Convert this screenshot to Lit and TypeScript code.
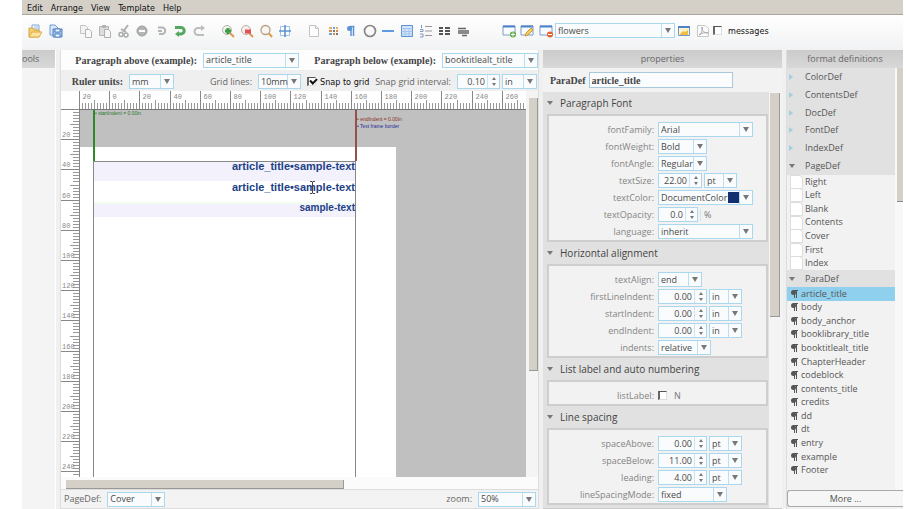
import { LitElement, html, svg, css } from "lit";
import { customElement } from "lit/decorators.js";
import { classMap } from "lit/directives/class-map.js";

const icons: Record<string, unknown> = {
  open: svg`<path d="M4 5V1h7v7" fill="#fff" stroke="#7fa6d8"/><path d="M6 3h4M6 5h4" stroke="#8fb3de"/><path d="M1 13V4h4l1 2h5v7z" fill="#f4cf74" stroke="#d9a63d"/><path d="M1 13l3-5h10l-3 5z" fill="#fbe3a0" stroke="#dfae45"/>`,
  save: svg`<path d="M1 11V1h5l3 3v7z" fill="#dbe8f8" stroke="#6f9ad2"/><path d="M4 5h9v8H4z" fill="#9fc0ea" stroke="#4f82c4"/><path d="M6 5h5v3H6zM6 10h5v3H6z" fill="#fff" stroke="#4f82c4"/>`,
  copy: svg`<path d="M1.500 1.500h5l2 2v6h-7z" fill="#f2f2f2" stroke="#c5c5c5"/><path d="M6.500 5.500h4l2 2v6h-6z" fill="#fafafa" stroke="#b4b4b4"/>`,
  paste: svg`<path d="M1.500 2.500h9v9h-9z" fill="#dcdcdc" stroke="#b4b4b4"/><path d="M4 1h4v3H4z" fill="#b4b4b4"/><path d="M6.500 5.500h4l2 2v6h-6z" fill="#f6f6f6" stroke="#b0b0b0"/>`,
  cut: svg`<path d="M11 1L6 8M4 5l5 3" stroke="#b0b0b0" stroke-width="2" fill="none"/><circle cx="4" cy="10.500" r="2" fill="none" stroke="#aaa" stroke-width="1.500"/><circle cx="9" cy="11" r="2" fill="none" stroke="#aaa" stroke-width="1.500"/>`,
  remove: svg`<circle cx="7" cy="7" r="5" fill="#b4b4b4" stroke="#9c9c9c"/><path d="M4 7h6" stroke="#fff" stroke-width="2"/>`,
  again: svg`<path d="M4 3.500h4a3 3 0 0 1 0 6.500H5M4 7h4" fill="none" stroke="#b4b4b4" stroke-width="2"/>`,
  undo: svg`<path d="M2 3.500h6a3 3 0 0 1 0 6.500H4" fill="none" stroke="#55a860" stroke-width="3"/><path d="M6 7v6L2 10z" fill="#55a860"/>`,
  redo: svg`<path d="M11 4H6a3 3 0 0 0 0 7h6" fill="none" stroke="#bdbdbd" stroke-width="2"/><path d="M9 1v6l4-3z" fill="#bdbdbd"/>`,
  zoomIn: svg`<circle cx="6" cy="6" r="4.500" fill="#eef6ee" stroke="#b8b0a4"/><path d="M9 9l4 4" stroke="#d99a4e" stroke-width="2"/><path d="M4 7h6M7 4v6" stroke="#3f9c4a" stroke-width="3"/>`,
  zoomOut: svg`<circle cx="6" cy="6" r="4.500" fill="#f8eeee" stroke="#b8b0a4"/><path d="M9 9l4 4" stroke="#d99a4e" stroke-width="2"/><path d="M5 7.500h6" stroke="#e0525a" stroke-width="4"/>`,
  zoom: svg`<circle cx="6.500" cy="6" r="4.500" fill="#f8f6f2" stroke="#bb9f80" stroke-width="1.300"/><path d="M10 9.500l3 3.500" stroke="#dd9c4e" stroke-width="2"/>`,
  grid: svg`<path d="M2.500 2.500h9v9h-9z" fill="#fff" stroke="#9fbfe6"/><path d="M7 1v12M1 7h12" stroke="#5f92cf" stroke-width="1.600"/>`,
  page: svg`<path d="M2.500 1.500h6l3 3v8h-9z" fill="#fff" stroke="#c4c4c4"/><path d="M8.500 1.500v3h3" fill="none" stroke="#c4c4c4"/>`,
  color: svg`<path d="M3 3h3v2H3zM10 3h2v2h-2z" fill="#e8b25c"/><path d="M7 3h2v2H7zM3 9h3v2H3z" fill="#6f9fd8"/><path d="M3 6h3v2H3zM10 6h2v2h-2zM7 9h2v2H7z" fill="#d98c4a"/><path d="M7 6h2v2H7zM10 9h2v2h-2z" fill="#777"/>`,
  para: svg`<path d="M10.500 2.500H6M7 2v10M9.500 2v10" stroke="#5d93d6" stroke-width="1.500"/><circle cx="5.500" cy="4.500" r="2.500" fill="#5d93d6"/>`,
  ring: svg`<circle cx="7" cy="7" r="5.500" fill="none" stroke="#858585" stroke-width="1.700"/>`,
  line: svg`<path d="M1 7h12" stroke="#5f9be0" stroke-width="2"/>`,
  table: svg`<path d="M1.500 1.500h11v11h-11z" fill="#d3e4f8" stroke="#5a8fd0"/><path d="M1.500 4.500h11M1.500 7.500h11M1.500 10h11M5 4v8M9 4v8" stroke="#a4c5ec" fill="none"/>`,
  list: svg`<path d="M6 2.500h7M6 7h7M6 11.500h7" stroke="#999"/><path d="M2.500 1v3M1 5.500h3v2H1M1 10h3v3H1" stroke="#7f98b8" fill="none"/>`,
  columns: svg`<path d="M2 4h4M8 4h5M2 7h4M8 7h5M2 10h4M8 10h5" stroke="#555" stroke-width="2"/>`,
  align: svg`<path d="M2 4.500h8M2 7h11M2 9h11M6 11.500h5" stroke="#666" stroke-width="1.500"/>`,
  winAdd: svg`<path d="M1 2h12v9H1z" fill="#f8fbff" stroke="#7d9cc9"/><path d="M1 2.500h12" stroke="#4f82cc" stroke-width="2"/><circle cx="11" cy="10.500" r="3" fill="#5fae45"/><path d="M9 10.500h4M11 8.500v4" stroke="#fff"/>`,
  winEdit: svg`<path d="M1 2h12v9H1z" fill="#f8fbff" stroke="#7d9cc9"/><path d="M1 2.500h12" stroke="#4f82cc" stroke-width="2"/><path d="M5 12l1-3 5-5 2 2-5 5z" fill="#f3cf5a" stroke="#c99a36"/>`,
  winDel: svg`<path d="M1 2h12v9H1z" fill="#f8fbff" stroke="#7d9cc9"/><path d="M1 2.500h12" stroke="#4f82cc" stroke-width="2"/><circle cx="11" cy="10.500" r="3" fill="#e2622e"/><path d="M9 10.500h4" stroke="#fff"/>`,
  image: svg`<path d="M1.500 2.500h11v9h-11z" fill="#fdf3c6" stroke="#6f97cf"/><path d="M1 3h12" stroke="#4f82cc" stroke-width="2"/><path d="M3 10l3-3 2 1 3-2v5H3z" fill="#efbd3f"/>`,
  pdf: svg`<path d="M1.500 1.500h8l3 3v8h-11z" fill="#fbfbfb" stroke="#c8c8c8"/><path d="M3 11c3-2 4-6 3-8-1 2 1 6 6 6-3-1-6 0-9 2z" fill="none" stroke="#aaa"/>`,
};

const icon = (name: string) =>
  html`<svg class="icon" viewBox="0 0 14 14" aria-hidden="true">${icons[name]}</svg>`;

const toolGroups: { cls: string; tools: string[] }[] = [
  { cls: "g-file", tools: ["open", "save"] },
  { cls: "g-edit", tools: ["copy", "paste", "cut", "remove", "again", "undo", "redo"] },
  { cls: "g-zoom", tools: ["zoomIn", "zoomOut", "zoom", "grid"] },
  { cls: "g-insert", tools: ["page", "color", "para", "ring", "line", "table", "list", "columns", "align"] },
  { cls: "g-view", tools: ["winAdd", "winEdit", "winDel"] },
];

const controls = css`
  * { box-sizing: border-box; }
  button, input, select { font: inherit; color: inherit; margin: 0; border-radius: 0; }
  button { border: 0; padding: 0; background: none; text-align: left; }
  .combo { position: relative; display: block; height: 15px; min-width: 0; }
  .combo select {
    appearance: none; display: block; width: 100%; height: 100%; padding: 0 11px 0 2px;
    border: 1px solid #a9d8ee; color: #4a4a4a; outline: 0;
    background: linear-gradient(#b9dff0, #b9dff0) right 12px top / 1px 100% no-repeat #f9fbfc;
  }
  .combo::after {
    content: ""; position: absolute; right: 4px; top: 5px; pointer-events: none;
    border: 3px solid transparent; border-top: 5px solid #777; border-bottom: 0;
  }
  .num { display: flex; height: 15px; border: 1px solid #a9d8ee; background: #f9fbfc; }
  .num input { flex: 1; width: 0; min-width: 0; border: 0; border-right: 1px solid #cbe6f2; background: none; padding: 0 2px; text-align: right; outline: 0; color: #4a4a4a; }
  .spin { width: 11px; display: flex; flex-direction: column; align-items: center; justify-content: center; gap: 3px; }
  .spin::before, .spin::after { content: ""; border: 2px solid transparent; }
  .spin::before { border-bottom: 3px solid #777; border-top: 0; }
  .spin::after { border-top: 3px solid #777; border-bottom: 0; }
  .tick { appearance: none; width: 9px; height: 9px; background: #fff; border: 1px solid #ddd; border-top: 1px solid #555; border-left: 2px solid #666; flex: none; position: relative; }
  .tick:checked::after { content: ""; position: absolute; left: 1px; top: 0; width: 5px; height: 3px; border: solid #111; border-width: 0 0 2px 2px; transform: rotate(-45deg); }
  .titlebar { height: 18px; flex: none; display: flex; align-items: center; justify-content: center; margin: 0; font-size: 9px; font-weight: 400; color: #666; background: linear-gradient(#cbcbcb, #d8d8d8); }
`;

const combo = (id: string, value: string, cls = "") =>
  html`<span class="combo ${cls}"><select id=${id} aria-label=${id}><option>${value}</option></select></span>`;
const num = (id: string, value: string, cls = "") =>
  html`<span class="num ${cls}"><input id=${id} aria-label=${id} .value=${value} /><span class="spin"></span></span>`;

const PITCH = 302 / 10;

@customElement("page-ruler")
class PageRuler extends LitElement {
  static properties = { vertical: { type: Boolean }, marks: { type: Number } };
  declare vertical: boolean;
  declare marks: number;
  static styles = css`
    :host { display: block; overflow: hidden; background: #fff; min-width: 0; min-height: 0; }
    svg { display: block; width: 100%; height: 100%; }
    text { font: 7px "Liberation Mono", monospace; fill: #888; }
    .major { stroke: #888; }
    .minor { stroke: #999; }
  `;
  render() {
    const v = this.vertical;
    const parts: unknown[] = [];
    for (let i = 0; i < this.marks * 10; i++) {
      const p = Math.round((i * PITCH) / 10) + 0.5;
      const major = i % 10 === 0;
      const len = major ? 18 : i % 5 === 0 ? 9 : 6;
      parts.push(v
        ? svg`<line class=${major ? "major" : "minor"} x1=${18 - len} x2="18" y1=${p} y2=${p} />`
        : svg`<line class=${major ? "major" : "minor"} y1=${18 - len} y2="18" x1=${p} x2=${p} />`);
      if (major) {
        const n = i / 10;
        if (v && n > 0) parts.push(svg`<text x="1" y=${p - 3}>${n * 20}</text>`);
        if (!v) parts.push(svg`<text x=${p + 3} y="8">${Math.abs(n - 1) * 20}</text>`);
      }
    }
    return html`<svg aria-hidden="true">${parts}</svg>`;
  }
}

@customElement("page-editor")
class PageEditor extends LitElement {
  static styles = [controls, css`
    :host { display: flex; flex-direction: column; min-width: 0; background: #efefef; border: 1px solid #ddd; border-width: 0 1px 1px; }
    .bar { display: grid; align-items: center; gap: 6px; flex: none; }
    .bar label, .status label { text-align: right; white-space: nowrap; }
    .bar .serif { font: bold 10px "Liberation Serif", serif; color: #444; }
    .above { height: 20px; background: #fdfdfd; grid-template-columns: 136px 96px 1fr 96px; }
    .units { height: 21px; padding-top: 2px; grid-template-columns: 62px 45px 1fr 43px 62px 76px 81px; }
    .bar .snap { display: flex; align-items: center; gap: 4px; color: #111; font: 9px "DejaVu Sans Condensed", "DejaVu Sans", sans-serif; }
    .pair { display: grid; grid-template-columns: 43px 35px; gap: 2px; }
    .work { flex: 1; min-height: 0; display: grid; grid-template: 18px 1fr 12px / 18px 1fr 12px; }
    .corner { background: #fff; }
    .canvas { position: relative; overflow: hidden; background: #c0c0c0; border-top: 1px solid #777; border-left: 1px solid #888; }
    .sheet { position: absolute; left: 0; top: 37px; width: 316px; bottom: 0; background: #fff; }
    .frame { position: absolute; left: 13px; top: 51px; width: 263px; bottom: 0; border: 1px solid #888; border-bottom: 0; color: #213f86; font: bold 11px/18px "Liberation Sans", sans-serif; text-align: right; }
    .frame p { margin: 0; }
    .band { background: #f2f1fc; height: 19px; line-height: 8px; }
    .mid { height: 23px; line-height: 12px; border-bottom: 2px solid #f1fcf1; }
    .small { font-size: 10px; height: 13px; line-height: 8px; }
    .guide { position: absolute; top: 0; height: 51px; width: 2px; }
    .start { left: 13px; background: #2c8a2c; }
    .end { left: 275px; background: #95504a; }
    .notes { position: absolute; font: 5px/7px "Liberation Sans", sans-serif; white-space: nowrap; }
    .note-start { left: 15px; top: 0; color: #2c7a2c; }
    .note-end { left: 277px; top: 6px; color: #8c2f2a; }
    .note-frame { color: #2b2b98; display: block; }
    .cursor { position: absolute; left: 229px; top: 71px; width: 7px; height: 13px; }
    .vbar { background: #f4f4f4; grid-row: 1 / span 2; grid-column: 3; padding: 7px 0 0 3px; }
    .vbar i { display: block; height: 72%; background: #d4d0c8; border-right: 1px solid #999; border-bottom: 1px solid #999; }
    .hbar { grid-column: 1 / span 3; background: #fbfbfb; padding: 3px 0 0 5px; }
    .hbar i { display: block; width: 59%; height: 9px; background: #d4d0c8; border-bottom: 1px solid #999; border-right: 1px solid #999; }
    .status { flex: none; height: 19px; display: flex; align-items: center; gap: 6px; padding: 0 2px 0 3px; border-top: 1px solid #ddd; background: #f3f3f3; }
    .status .push { margin-left: auto; }
    .w58 { width: 58px; }
  `];
  render() {
    return html`
      <div class="bar above">
        <label class="serif" for="above">Paragraph above (example):</label>${combo("above", "article_title")}
        <label class="serif" for="below">Paragraph below (example):</label>${combo("below", "booktitlealt_title")}
      </div>
      <div class="bar units">
        <label class="serif" for="units">Ruler units:</label>${combo("units", "mm")}
        <label for="lines">Grid lines:</label>${combo("lines", "10mm")}
        <label class="snap"><input class="tick" type="checkbox" checked />Snap to grid</label>
        <label for="interval">Snap grid interval:</label>
        <span class="pair">${num("interval", "0.10")}${combo("interval-unit", "in")}</span>
      </div>
      <div class="work">
        <div class="corner"></div>
        <page-ruler marks="15"></page-ruler>
        <div class="vbar"><i></i></div>
        <page-ruler vertical marks="13"></page-ruler>
        <div class="canvas">
          <div class="sheet"></div>
          <div class="frame">
            <p class="band">article_title•sample-text</p>
            <p class="mid">article_title•sample-text</p>
            <p class="band small">sample-text</p>
          </div>
          <div class="guide start"></div>
          <div class="guide end"></div>
          <div class="notes note-start">• startIndent = 0.00in</div>
          <div class="notes note-end">• endIndent = 0.00in<span class="note-frame">• Text frame border</span></div>
          <svg class="cursor" viewBox="0 0 7 13" aria-hidden="true"><path d="M1 .5h2l.5 1 .5-1h2M3.500 1v11M1 12.500h2l.5-1 .5 1h2" fill="none" stroke="#444"/></svg>
        </div>
        <div class="hbar"><i></i></div>
      </div>
      <div class="status">
        <label for="pagedef">PageDef:</label>${combo("pagedef", "Cover", "w58")}
        <label class="push" for="zoom">zoom:</label>${combo("zoom", "50%", "w58")}
      </div>`;
  }
}

type Field = { name: string; kind: "combo" | "num" | "color" | "check"; value: string; cls: string; unit?: string };
const sections: { title: string; fields: Field[] }[] = [
  { title: "Paragraph Font", fields: [
    { name: "fontFamily", kind: "combo", value: "Arial", cls: "w95" },
    { name: "fontWeight", kind: "combo", value: "Bold", cls: "w49" },
    { name: "fontAngle", kind: "combo", value: "Regular", cls: "w49" },
    { name: "textSize", kind: "num", value: "22.00", cls: "w44", unit: "pt" },
    { name: "textColor", kind: "color", value: "DocumentColor", cls: "w95" },
    { name: "textOpacity", kind: "num", value: "0.0", cls: "w40", unit: "%" },
    { name: "language", kind: "combo", value: "inherit", cls: "w95" },
  ] },
  { title: "Horizontal alignment", fields: [
    { name: "textAlign", kind: "combo", value: "end", cls: "w44" },
    { name: "firstLineIndent", kind: "num", value: "0.00", cls: "w49", unit: "in" },
    { name: "startIndent", kind: "num", value: "0.00", cls: "w49", unit: "in" },
    { name: "endIndent", kind: "num", value: "0.00", cls: "w49", unit: "in" },
    { name: "indents", kind: "combo", value: "relative", cls: "w53" },
  ] },
  { title: "List label and auto numbering", fields: [
    { name: "listLabel", kind: "check", value: "N", cls: "" },
  ] },
  { title: "Line spacing", fields: [
    { name: "spaceAbove", kind: "num", value: "0.00", cls: "w49", unit: "pt" },
    { name: "spaceBelow", kind: "num", value: "11.00", cls: "w49", unit: "pt" },
    { name: "leading", kind: "num", value: "4.00", cls: "w49", unit: "pt" },
    { name: "lineSpacingMode", kind: "combo", value: "fixed", cls: "w69" },
  ] },
];

@customElement("property-panel")
class PropertyPanel extends LitElement {
  static styles = [controls, css`
    :host { display: flex; flex-direction: column; background: #f2f2f2; border-bottom: 1px solid #ccc; overflow: hidden; }
    .name { height: 24px; flex: none; display: flex; align-items: center; gap: 3px; padding-left: 7px; font: bold 10px "Liberation Serif", serif; color: #444; }
    .name input { width: 144px; height: 16px; padding: 0 2px; border: 1px solid #a9c8dc; background: #fafcfd; outline: 0; }
    .body { flex: 1; min-height: 0; display: flex; }
    .sections { flex: 1; background: #e1e1e1; padding: 0 1px 0 4px; overflow: hidden; }
    h3 { margin: 0; height: 22px; font-size: 10px; font-weight: 400; color: #444; }
    h3 button { height: 100%; display: flex; align-items: center; gap: 7px; }
    h3 button::before { content: ""; border: 3px solid transparent; border-top: 4px solid #777; border-bottom: 0; }
    .group { border: 2px solid #cecece; background: #f2f2f2; padding-top: 5px; }
    .row { height: 17px; display: flex; align-items: center; gap: 4px; }
    .row label { width: 105px; text-align: right; color: #848484; }
    .controls { display: flex; align-items: center; gap: 2px; position: relative; }
    .check { gap: 7px; color: #777; }
    .swatch { position: absolute; right: 14px; top: 2px; width: 11px; height: 11px; background: #12306f; pointer-events: none; }
    .track { width: 13px; background: #f4f4f4; padding: 1px 2px 0 1px; }
    .track i { display: block; height: 54%; background: #d4d0c8; border-right: 1px solid #999; border-bottom: 1px solid #999; }
    .w95 { width: 95px; } .w69 { width: 69px; } .w53 { width: 53px; } .w49 { width: 49px; }
    .w44 { width: 44px; } .w40 { width: 40px; } .w33 { width: 33px; }
    .pct { padding-left: 3px; border-left: 1px solid #cbe6f2; color: #777; }
  `];
  private control(f: Field) {
    if (f.kind === "check") return html`<span class="controls check"><input id=${f.name} class="tick" type="checkbox" />${f.value}</span>`;
    if (f.kind === "num") return html`<span class="controls">${num(f.name, f.value, f.cls)}${f.unit === "%" ? html`<span class="pct">%</span>` : combo(f.name + "-unit", f.unit!, "w33")}</span>`;
    return html`<span class="controls">${combo(f.name, f.value, f.cls)}${f.kind === "color" ? html`<i class="swatch"></i>` : ""}</span>`;
  }
  render() {
    return html`
      <h2 class="titlebar">properties</h2>
      <div class="name"><label for="paradef">ParaDef</label><input id="paradef" .value=${"article_title"} /></div>
      <div class="body">
        <div class="sections">
          ${sections.map((s) => html`<h3><button>${s.title}</button></h3>
            <div class="group">${s.fields.map((f) => html`<div class="row"><label for=${f.name}>${f.name}:</label>${this.control(f)}</div>`)}</div>`)}
        </div>
        <div class="track"><i></i></div>
      </div>`;
  }
}

@customElement("format-panel")
class FormatPanel extends LitElement {
  static styles = [controls, css`
    :host { display: flex; flex-direction: column; background: #f2f2f2; border-left: 1px solid #ddd; }
    .body { flex: 1; min-height: 0; display: flex; }
    .list { flex: 1; overflow: hidden; }
    .group { display: grid; grid-auto-rows: minmax(0, 1fr); line-height: 12px; }
    .defs { height: 107px; }
    .defs, .solo { background: #e1e1e1; }
    .pages { height: 95px; }
    .paras { height: 190px; }
    button { display: flex; align-items: center; color: #555; white-space: nowrap; }
    .def { gap: 10px; padding-left: 2px; width: 100%; }
    .def::before { content: ""; border: 3px solid transparent; border-left: 4px solid #9fd0df; border-right: 0; margin-right: 2px; }
    .def.open::before { border: 3px solid transparent; border-top: 4px solid #777; border-bottom: 0; margin-right: 0; }
    .solo { height: 17px; }
    .item { gap: 3px; padding-left: 4px; }
    .pages .item { gap: 2px; padding-left: 3px; }
    .pages .item::before { content: ""; width: 11px; height: 12px; background: #fff; border: 1px solid #ddd; border-top-right-radius: 4px; }
    .item.selected { background: #8fd0ee; }
    .mark { width: 7px; height: 8px; }
    .track { width: 8px; background: #f8f8f8; }
    .track i { display: block; height: 134px; margin-left: 2px; background: #d4d0c8; border-bottom: 1px solid #888; }
    .more { flex: none; height: 17px; margin-bottom: 2px; justify-content: center; border: 1px solid #aaa; border-right: 0; border-radius: 3px 0 0 3px; background: #f6f6f6; font-size: 9px; }
  `];
  render() {
    const defs = ["ColorDef", "ContentsDef", "DocDef", "FontDef", "IndexDef", "PageDef"];
    const pages = ["Right", "Left", "Blank", "Contents", "Cover", "First", "Index"];
    const paras = ["article_title", "body", "body_anchor", "booklibrary_title", "booktitlealt_title", "ChapterHeader", "codeblock", "contents_title", "credits", "dd", "dt", "entry", "example", "Footer"];
    return html`
      <h2 class="titlebar">format definitions</h2>
      <div class="body">
        <div class="list">
          <div class="group defs">${defs.map((d) => html`<button class=${classMap({ def: true, open: d === "PageDef" })}>${d}</button>`)}</div>
          <div class="group pages">${pages.map((p) => html`<button class="item">${p}</button>`)}</div>
          <button class="def open solo">ParaDef</button>
          <div class="group paras">${paras.map((p) => html`<button class=${classMap({ item: true, selected: p === "article_title" })}>
            <svg class="mark" viewBox="0 0 7 8" aria-hidden="true"><circle cx="2.500" cy="2.500" r="2.500" fill="#555"/><path d="M2 .5h5M3.500 0v8M5.500 0v8" stroke="#555" fill="none"/></svg>${p}</button>`)}</div>
        </div>
        <div class="track"><i></i></div>
      </div>
      <button class="more">More ...</button>`;
  }
}

@customElement("app-root")
class AppRoot extends LitElement {
  static styles = [controls, css`
    :host { display: flex; flex-direction: column; height: 100vh; padding: 0 3px 0 22px; background: #fff; color: #666; font: 9px/12px "Open Sans", "Noto Sans", sans-serif; overflow: hidden; }
    nav { flex: none; height: 15px; display: flex; align-items: center; gap: 8px; padding: 2px 0 0 5px; background: #d4d0c8; border-bottom: 1px solid #aaa69e; }
    nav button { color: #111; font: 9px "DejaVu Sans Condensed", "DejaVu Sans", sans-serif; }
    .toolbar { flex: none; height: 35px; display: flex; align-items: center; padding-left: 2px; padding-bottom: 4px; background: linear-gradient(#fff, #f1f2f3); }
    .tools { display: grid; grid-auto-flow: column; grid-auto-columns: 1fr; margin-right: 11px; }
    .tools button { display: flex; justify-content: center; }
    .icon { width: 14px; height: 14px; display: block; }
    .g-file { width: 42px; } .g-edit { width: 131px; } .g-zoom { width: 75px; }
    .g-insert { width: 167px; margin-right: 28px; } .g-view { width: 55px; margin-right: 0; }
    .w120 { width: 120px; }
    .output { width: 37px; margin: 0 1px 0 0; }
    .messages { display: flex; align-items: center; gap: 6px; color: #111; font: 9px "DejaVu Sans Condensed", "DejaVu Sans", sans-serif; }
    main { flex: 1; min-height: 0; display: grid; grid-template-columns: 34px 1fr 239px 117px; gap: 4px; background: #f0f0f0; }
    .left { background: #f4f4f4; border-right: 1px solid #fff; }
    .left .titlebar { justify-content: flex-start; overflow: hidden; }
  `];
  render() {
    return html`
      <nav>${["Edit", "Arrange", "View", "Template", "Help"].map((m) => html`<button>${m}</button>`)}</nav>
      <div class="toolbar">
        ${toolGroups.map((g) => html`<div class="tools ${g.cls}">${g.tools.map((t) => html`<button aria-label=${t}>${icon(t)}</button>`)}</div>`)}
        ${combo("document", "flowers", "w120")}
        <div class="tools output"><button aria-label="image">${icon("image")}</button><button aria-label="pdf">${icon("pdf")}</button></div>
        <label class="messages"><input class="tick" type="checkbox" />messages</label>
      </div>
      <main>
        <section class="left"><h2 class="titlebar">ools</h2></section>
        <page-editor></page-editor>
        <property-panel></property-panel>
        <format-panel></format-panel>
      </main>`;
  }
}
